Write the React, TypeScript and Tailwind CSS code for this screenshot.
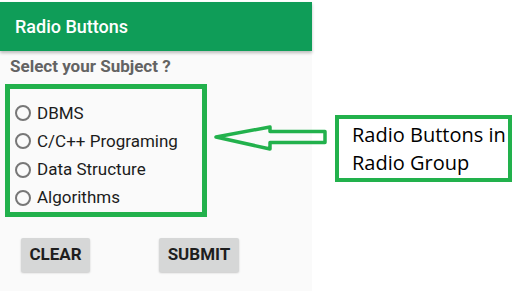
import React, { useState } from 'react';

const subjects = ['DBMS', 'C/C++ Programing', 'Data Structure', 'Algorithms'];

const App: React.FC = () => {
  const [selected, setSelected] = useState<string | null>(null);

  return (
    <div className="relative flex w-[524px] h-[291px] bg-white overflow-hidden" style={{ fontFamily: 'Roboto, "Noto Sans", sans-serif' }}>
      {/* Phone screen */}
      <div className="flex flex-col w-[312px] mt-[2px] bg-[#fafafa]">
        <div className="h-[49px] flex items-center pl-[15px] bg-[#0f9d58] shadow-[0_2px_3px_rgba(0,0,0,0.25)]">
          <span className="text-white text-[18px] font-medium">Radio Buttons</span>
        </div>
        <div className="pl-[10px] pt-[3px] text-[17px] font-bold text-[#636363] leading-[24px]">
          Select your Subject ?
        </div>

        {/* Radio group */}
        <div className="ml-[5px] mt-[6px] w-[202px] h-[133px] border-[5px] border-[#22b14c] flex flex-col pl-[5px] pt-[10px]">
          {subjects.map((s) => (
            <button
              key={s}
              type="button"
              onClick={() => setSelected(s)}
              className="flex items-center gap-[6px] h-[28.5px] text-left"
            >
              <span className="w-[16px] h-[16px] rounded-full border-2 border-[#777] flex items-center justify-center">
                {selected === s && <span className="w-[8px] h-[8px] rounded-full bg-[#0f9d58]" />}
              </span>
              <span className="text-[17px] text-[#1c1c1c] leading-none">{s}</span>
            </button>
          ))}
        </div>

        {/* Buttons */}
        <div className="flex gap-[69px] pl-[21px] mt-[21px]">
          <button
            type="button"
            onClick={() => setSelected(null)}
            className="w-[69px] h-[34px] rounded-[2px] bg-[#d6d7d7] shadow-[0_1px_2px_rgba(0,0,0,0.2)] text-[17px] font-bold text-[#1e1e1e]"
          >
            CLEAR
          </button>
          <button
            type="button"
            className="w-[80px] h-[34px] rounded-[2px] bg-[#d6d7d7] shadow-[0_1px_2px_rgba(0,0,0,0.2)] text-[17px] font-bold text-[#1e1e1e]"
          >
            SUBMIT
          </button>
        </div>
      </div>

      {/* Annotation label */}
      <div className="ml-[23px] mt-[115px] w-[177px] h-[67px] border-[4px] border-[#22b14c] pl-[13px] flex flex-col justify-center">
        <span className="text-[20px] leading-[28px] text-black" style={{ fontFamily: '"Open Sans", sans-serif' }}>
          Radio Buttons in
        </span>
        <span className="text-[20px] leading-[28px] text-black" style={{ fontFamily: '"Open Sans", sans-serif' }}>
          Radio Group
        </span>
      </div>

      {/* Arrow overlay */}
      <svg className="absolute left-0 top-0 pointer-events-none" width="524" height="291" viewBox="0 0 524 291">
        <path
          d="M216 137 L270 127 L270 131.5 L325 131.5 L325 142.5 L270 142.5 L270 149 Z"
          fill="none"
          stroke="#22b14c"
          strokeWidth="3.5"
          strokeLinejoin="round"
        />
      </svg>
    </div>
  );
};

export default App;
